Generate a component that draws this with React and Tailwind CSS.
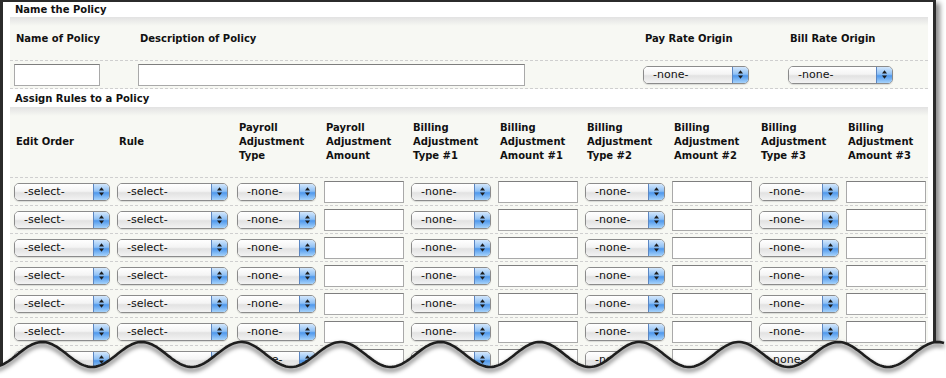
import React from 'react';

const WAVE_TROUGH = 92;
const WAVE_PERIOD = 99.5;

function wavePoints() {
    const pts = [];
    for (let x = -4; x <= 944; x += 2) {
        const y = 354.5 + 12.5 * Math.cos((2 * Math.PI * (x - WAVE_TROUGH)) / WAVE_PERIOD);
        pts.push([x, y]);
    }
    return pts;
}

function Arrows() {
    return (
        <svg width="7" height="11" viewBox="0 0 7 11">
            <path d="M1 4.5 L3.5 1.2 L6 4.5 Z" fill="#1d1d1d" />
            <path d="M1 6.5 L3.5 9.8 L6 6.5 Z" fill="#1d1d1d" />
        </svg>
    );
}

function Select({ label, className }) {
    return (
        <div className={`flex h-[18px] overflow-hidden rounded-[5px] border border-[#8b8b8b] shadow-[0_1px_1px_rgba(0,0,0,0.12)] ${className}`}>
            <div className="flex flex-1 items-center bg-[linear-gradient(to_bottom,#ffffff,#f4f4f4_45%,#e2e2e2_55%,#f3f3f3)] pl-[9px] text-[11px] leading-none text-[#111]">
                {label}
            </div>
            <div className="flex w-[16px] items-center justify-center border-l border-[#5b86c2] bg-[linear-gradient(to_bottom,#d3e7fc,#8ec0f5_45%,#4f98ec_55%,#a7d3fb)]">
                <Arrows />
            </div>
        </div>
    );
}

function Field({ className }) {
    return <div className={`h-[22px] border border-[#a9a9a9] border-t-[#7e7e7e] bg-white ${className}`} />;
}

const headCols = [
    ['Edit Order'],
    ['Rule'],
    ['Payroll', 'Adjustment', 'Type'],
    ['Payroll', 'Adjustment', 'Amount'],
    ['Billing', 'Adjustment', 'Type #1'],
    ['Billing', 'Adjustment', 'Amount #1'],
    ['Billing', 'Adjustment', 'Type #2'],
    ['Billing', 'Adjustment', 'Amount #2'],
    ['Billing', 'Adjustment', 'Type #3'],
    ['Billing', 'Adjustment', 'Amount #3'],
];

const gridCols = 'grid grid-cols-[103px_120px_87px_87px_87px_87px_87px_87px_87px_87px]';

function RuleRow() {
    return (
        <div className={`${gridCols} h-[28px] items-center border-b border-dashed border-[#cfcfcf] pl-[4px]`}>
            <Select label="-select-" className="w-[96px]" />
            <Select label="-select-" className="w-[111px]" />
            <Select label="-none-" className="w-[79px]" />
            <Field className="w-[80px]" />
            <Select label="-none-" className="w-[80px]" />
            <Field className="w-[80px]" />
            <Select label="-none-" className="w-[80px]" />
            <Field className="w-[80px]" />
            <Select label="-none-" className="w-[80px]" />
            <Field className="w-[80px]" />
        </div>
    );
}

export default function App() {
    const pts = wavePoints();
    const line = pts.map(([x, y], i) => `${i ? 'L' : 'M'}${x} ${y.toFixed(1)}`).join(' ');
    const fill = `${line} L946 378 L-4 378 Z`;

    return (
        <div className="relative h-[378px] w-[946px] overflow-hidden bg-white font-['DejaVu_Sans',sans-serif] text-[#111]">
            <div className="h-[390px] w-[936px] border-x-[3px] border-t-[2px] border-[#2b2b2b] bg-white shadow-[4px_3px_5px_rgba(0,0,0,0.45)]">
                <div className="flex h-[15px] items-center pl-[12px] text-[10px] font-bold">Name the Policy</div>

                <div className="ml-[7px] mr-[5px] bg-[linear-gradient(to_bottom,#e2e2e2,#f7f8f3_9px)]">
                    <div className="grid h-[44px] grid-cols-[124px_505px_145px_1fr] items-center border-b border-dashed border-[#cfcfcf] pl-[6px] text-[10px] font-bold">
                        <div>Name of Policy</div>
                        <div>Description of Policy</div>
                        <div>Pay Rate Origin</div>
                        <div>Bill Rate Origin</div>
                    </div>
                    <div className="grid h-[28px] grid-cols-[124px_505px_145px_1fr] items-center border-b border-dashed border-[#cfcfcf] pl-[4px]">
                        <Field className="w-[86px]" />
                        <Field className="w-[387px]" />
                        <Select label="-none-" className="w-[106px]" />
                        <Select label="-none-" className="w-[105px]" />
                    </div>
                </div>

                <div className="flex h-[18px] items-center pl-[12px] text-[10px] font-bold">Assign Rules to a Policy</div>

                <div className="ml-[7px] mr-[5px] bg-[linear-gradient(to_bottom,#e2e2e2,#f7f8f3_9px)]">
                    <div className={`${gridCols} h-[71px] items-center border-b border-dashed border-[#cfcfcf] pl-[6px] text-[10px] font-bold leading-[14px]`}>
                        {headCols.map((lines, i) => (
                            <div key={i} className="flex flex-col">
                                {lines.map((t) => (
                                    <span key={t}>{t}</span>
                                ))}
                            </div>
                        ))}
                    </div>
                    {Array.from({ length: 8 }).map((_, i) => (
                        <RuleRow key={i} />
                    ))}
                </div>
            </div>

            {/* torn bottom edge */}
            <svg className="absolute left-0 top-[320px]" width="946" height="58" viewBox="0 320 946 58">
                <defs>
                    <filter id="blur" x="-5%" y="-50%" width="110%" height="200%">
                        <feGaussianBlur stdDeviation="2" />
                    </filter>
                </defs>
                <path d={fill} fill="#ffffff" />
                <path d={line} transform="translate(0 3)" fill="none" stroke="rgba(0,0,0,0.45)" strokeWidth="4" filter="url(#blur)" />
                <path d={line} fill="none" stroke="#1e1e1e" strokeWidth="2.6" />
            </svg>
        </div>
    );
}
